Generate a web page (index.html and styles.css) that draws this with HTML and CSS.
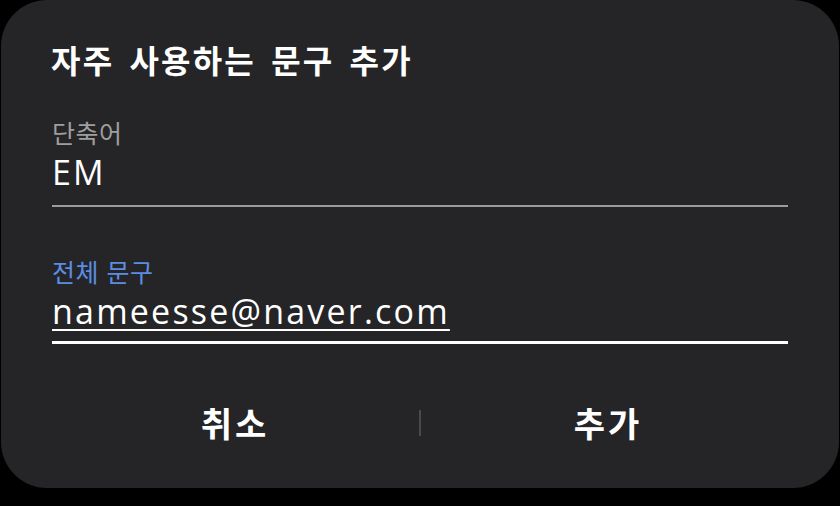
FILE: index.html
```html
<!DOCTYPE html>
<html lang="ko">
<head>
	<meta charset="utf-8">
	<title>자주 사용하는 문구 추가</title>
	<link rel="stylesheet" href="styles.css">
</head>
<body>
	<main class="dialog">
		<h1 class="dialog-title">자주 사용하는 문구 추가</h1>

		<div class="field">
			<label class="field-label" for="shortcut">단축어</label>
			<div class="field-value" id="shortcut">EM</div>
			<span class="field-line"></span>
		</div>

		<div class="field field-active">
			<label class="field-label" for="phrase">전체 문구</label>
			<div class="field-value" id="phrase"><u>nameesse@naver.com</u></div>
			<span class="field-line"></span>
		</div>

		<div class="actions">
			<button class="action" type="button">취소</button>
			<span class="divider"></span>
			<button class="action" type="button">추가</button>
		</div>
	</main>
</body>
</html>
```

FILE: styles.css
```css
html, body {
	margin: 0;
	padding: 0;
	height: 100%;
	background: #000;
	font-family: "Noto Sans CJK KR", "Noto Sans", sans-serif;
	-webkit-font-smoothing: antialiased;
}

* {
	box-sizing: border-box;
}

.dialog {
	margin: 0 1px;
	height: 488px;
	background: #252527;
	border-radius: 46px;
	padding: 39px 51px 0;
	display: flex;
	flex-direction: column;
}

.dialog-title {
	margin: 0 0 0 -1px;
	color: #fff;
	font-size: 32px;
	font-weight: 700;
	line-height: 40px;
	letter-spacing: 2.2px;
	word-spacing: 4px;
}

.field {
	display: flex;
	flex-direction: column;
	margin-top: 38px;
}

.field + .field {
	margin-top: 49px;
}

.field-label {
	color: #9e9e9f;
	font-size: 25px;
	line-height: 30px;
	letter-spacing: 0.5px;
}

.field-active .field-label {
	color: #5b8de4;
}

.field-value {
	margin-top: 3px;
	color: #fff;
	font-family: "Open Sans", "Liberation Sans", sans-serif;
	font-size: 34px;
	line-height: 44px;
	letter-spacing: 2.2px;
}

.field-value u {
	text-decoration-thickness: 2px;
	text-underline-offset: 5px;
}

.field-line {
	display: block;
	height: 2px;
	margin-top: 11px;
	background: #9b9b9c;
}

.field-active .field-line {
	height: 3px;
	margin-top: 8px;
	background: #fff;
}

.actions {
	display: flex;
	align-items: center;
	margin: 57px -4px 0;
}

.action {
	flex: 1;
	padding: 0 0 0 3px;
	border: none;
	background: none;
	color: #fff;
	font-family: inherit;
	font-size: 34px;
	font-weight: 700;
	line-height: 44px;
	letter-spacing: 3px;
}

.divider {
	width: 2px;
	height: 26px;
	background: #4a4a4c;
}
```
